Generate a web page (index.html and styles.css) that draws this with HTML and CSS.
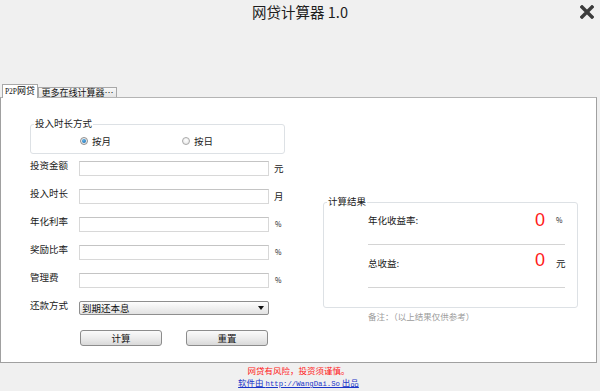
FILE: index.html
```html
<!DOCTYPE html>
<html lang="zh-CN">
<head>
<meta charset="utf-8">
<title>网贷计算器 1.0</title>
<link rel="stylesheet" href="styles.css">
</head>
<body>
<div class="app">
  <header class="titlebar">
    <h1 class="title">网贷计算器 1.0</h1>
    <div class="close" aria-label="关闭">
      <svg width="14" height="14" viewBox="0 0 14 14"><path d="M2 2 L12 12 M12 2 L2 12" stroke="#3c3c3c" stroke-width="3.4" stroke-linecap="square" fill="none"/></svg>
    </div>
  </header>
  <nav class="tabs">
    <div class="tab active"><span class="p2p">P2P</span>网贷</div>
    <div class="tab">更多在线计算器…</div>
  </nav>
  <main class="panel">
    <section class="form-col">
      <div class="group period">
        <span class="legend">投入时长方式</span>
        <label class="radio"><span class="dot checked"></span>按月</label>
        <label class="radio"><span class="dot"></span>按日</label>
      </div>
      <div class="row"><span class="lbl">投资金额</span><input class="field" type="text"><span class="unit">元</span></div>
      <div class="row"><span class="lbl">投入时长</span><input class="field" type="text"><span class="unit">月</span></div>
      <div class="row"><span class="lbl">年化利率</span><input class="field" type="text"><span class="unit pct">%</span></div>
      <div class="row"><span class="lbl">奖励比率</span><input class="field" type="text"><span class="unit pct">%</span></div>
      <div class="row"><span class="lbl">管理费</span><input class="field" type="text"><span class="unit pct">%</span></div>
      <div class="row"><span class="lbl">还款方式</span>
        <div class="select"><span>到期还本息</span>
          <svg width="6" height="4" viewBox="0 0 6 4"><path d="M0 0 H6 L3 4 Z" fill="#111"/></svg>
        </div>
      </div>
      <div class="buttons">
        <button class="btn" type="button">计算</button>
        <button class="btn" type="button">重置</button>
      </div>
    </section>
    <section class="result-col">
      <div class="group result">
        <span class="legend">计算结果</span>
        <div class="res-row"><span class="res-lbl">年化收益率:</span><span class="res-val">0</span><span class="res-unit pct">%</span></div>
        <div class="res-row second"><span class="res-lbl">总收益:</span><span class="res-val">0</span><span class="res-unit">元</span></div>
      </div>
      <p class="note">备注：（以上结果仅供参考）</p>
    </section>
  </main>
  <footer class="footer">
    <p class="risk">网贷有风险，投资须谨慎。</p>
    <a class="credit" href="#">软件由 <span class="url">http://WangDai.So</span> 出品</a>
  </footer>
</div>
</body>
</html>
```

FILE: styles.css
```css
* { box-sizing: border-box; margin: 0; padding: 0; }

body {
  width: 600px;
  height: 391px;
  overflow: hidden;
  background: #f0f0f0;
  font-family: "Noto Sans CJK SC", "Noto Sans", sans-serif;
  font-size: 9.5px;
  color: #1a1a1a;
}

.app { display: flex; flex-direction: column; width: 600px; height: 391px; }

.titlebar {
  height: 84px;
  display: grid;
  grid-template-columns: 1fr auto 1fr;
  align-items: start;
}
.title {
  grid-column: 2;
  font-size: 14.5px;
  font-weight: normal;
  line-height: 16px;
  margin-top: 4px;
  color: #1e1e1e;
}
.close {
  grid-column: 3;
  justify-self: end;
  width: 14px;
  height: 14px;
  margin: 5px 6px 0 0;
}
.close svg { display: block; }

.tabs {
  height: 13px;
  display: flex;
  align-items: flex-end;
  padding-left: 2px;
  position: relative;
  z-index: 1;
}
.tab {
  width: 79px;
  height: 10px;
  border: 1px solid #a8a8a8;
  border-bottom: none;
  background: linear-gradient(#f8f8f8, #e4e4e4);
  font-size: 9px;
  line-height: 9px;
  text-align: center;
  color: #111;
  white-space: nowrap;
}
.tab.active {
  width: 36px;
  height: 14px;
  margin-bottom: -1px;
  background: #fff;
  line-height: 11px;
}
.p2p { font-family: "Liberation Serif", serif; font-size: 7.5px; }

.panel {
  width: 597px;
  height: 266px;
  border: 1px solid #a0a0a0;
  border-top-color: #b4b4b4;
  background: #fff;
  display: flex;
  align-items: flex-start;
}

.form-col { padding: 26px 0 0 29px; }

.group {
  position: relative;
  width: 255px;
  border: 1px solid #dde1e5;
  border-radius: 3px;
}
.legend {
  position: absolute;
  top: -8px;
  left: 3px;
  padding: 0 1px;
  background: #fff;
  line-height: 12px;
}

.period {
  height: 30px;
  display: flex;
  align-items: center;
  padding: 4px 0 0 49px;
}
.radio { width: 105px; display: flex; align-items: center; gap: 4px; line-height: 10px; }
.dot {
  width: 8px;
  height: 8px;
  border-radius: 50%;
  border: 1px solid #a9a9a9;
  background: radial-gradient(circle at 50% 40%, #fff, #e2e2e2);
  display: flex;
  align-items: center;
  justify-content: center;
}
.dot.checked { border-color: #8e8e8e; }
.dot.checked::after {
  content: "";
  width: 4px;
  height: 4px;
  border-radius: 50%;
  background: radial-gradient(circle at 40% 35%, #5fb2e8, #1463a8);
}

.row { height: 28px; display: flex; align-items: center; }
.lbl { width: 49px; align-self: flex-start; margin-top: 6px; line-height: 10px; }
.field {
  width: 190px;
  height: 15px;
  border: 1px solid #d8d8d8;
  border-top-color: #c4c4c4;
  background: #fff;
  outline: none;
}
.unit { margin-left: 5px; line-height: 10px; }
.unit.pct { font-size: 7px; margin-left: 6px; }

.select {
  width: 190px;
  height: 14px;
  border: 1px solid #8e8e8e;
  border-radius: 2px;
  background: linear-gradient(#fdfdfd, #e2e2e2);
  display: flex;
  align-items: center;
  justify-content: space-between;
  padding: 0 4px 0 2px;
  line-height: 10px;
  color: #111;
}
.select svg { display: block; }

.buttons { display: flex; gap: 24px; margin: 8px 0 0 50px; }
.btn {
  width: 82px;
  height: 16px;
  border: 1px solid #8c8c8c;
  border-radius: 3px;
  background: linear-gradient(#fafafa, #ececec 50%, #d9d9d9);
  font-family: inherit;
  font-size: 9.5px;
  line-height: 10px;
  color: #111;
}

.result-col { margin: 104px 0 0 38px; }
.result { height: 106px; padding-left: 44px; }
.res-row {
  width: 197px;
  height: 42px;
  border-bottom: 1px solid #d4d4d4;
  display: flex;
  align-items: flex-start;
  padding-top: 11px;
}
.res-row.second { height: 43px; padding-top: 12px; }
.res-lbl { flex: 1; line-height: 12px; }
.res-val {
  font-family: "Liberation Sans", sans-serif;
  font-size: 18px;
  line-height: 14px;
  color: #ff1a1a;
  margin-top: -1px;
}
.res-row.second .res-val { margin-top: -4px; }
.res-unit { width: 9px; margin-left: 11px; line-height: 12px; }
.res-unit.pct { font-size: 7px; }

.note { margin: 3px 0 0 45px; line-height: 10px; font-size: 8.5px; color: #9c9c9c; }

.footer {
  display: flex;
  flex-direction: column;
  align-items: center;
  padding: 2px 3px 0 0;
  font-size: 8.5px;
  line-height: 10px;
}
.risk { color: #ff2020; }
.credit { margin-top: 2px; color: #1a35c8; text-decoration: underline; }
.url { font-family: "Liberation Mono", monospace; font-size: 7.3px; }
```
